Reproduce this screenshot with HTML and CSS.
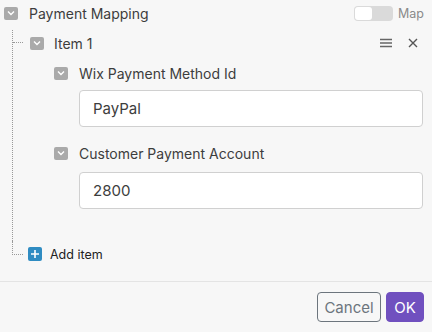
FILE: index.html
```
<!DOCTYPE html>
<html lang="en">
<head>
	<meta charset="UTF-8">
	<title>Payment Mapping</title>
	<link rel="stylesheet" href="styles.css">
</head>
<body>
	<div class="panel">
		<div class="row top">
			<span class="caret"><svg width="8" height="6" viewBox="0 0 8 6"><path d="M1 1.5 L4 4.5 L7 1.5" fill="none" stroke="#fff" stroke-width="1.4"/></svg></span>
			<span class="title">Payment Mapping</span>
			<span class="toggle"><span class="knob"></span></span>
			<span class="map">Map</span>
		</div>

		<div class="tree">
			<div class="row item-head">
				<span class="caret"><svg width="8" height="6" viewBox="0 0 8 6"><path d="M1 1.5 L4 4.5 L7 1.5" fill="none" stroke="#fff" stroke-width="1.4"/></svg></span>
				<span class="title">Item 1</span>
				<span class="tools">
					<svg width="12" height="10" viewBox="0 0 12 10"><path d="M0 1.5 H12 M0 5 H12 M0 8.5 H12" stroke="#666" stroke-width="1.3"/></svg>
					<svg width="10" height="10" viewBox="0 0 10 10"><path d="M1 1 L9 9 M9 1 L1 9" stroke="#555" stroke-width="1.4"/></svg>
				</span>
			</div>

			<div class="field first">
				<div class="row label">
					<span class="caret"><svg width="8" height="6" viewBox="0 0 8 6"><path d="M1 1.5 L4 4.5 L7 1.5" fill="none" stroke="#fff" stroke-width="1.4"/></svg></span>
					<span>Wix Payment Method Id</span>
				</div>
				<div class="input">PayPal</div>
			</div>

			<div class="field second">
				<div class="row label">
					<span class="caret"><svg width="8" height="6" viewBox="0 0 8 6"><path d="M1 1.5 L4 4.5 L7 1.5" fill="none" stroke="#fff" stroke-width="1.4"/></svg></span>
					<span>Customer Payment Account</span>
				</div>
				<div class="input">2800</div>
			</div>
		</div>

		<div class="row add">
			<span class="plus"><svg width="10" height="10" viewBox="0 0 10 10"><path d="M5 1 V9 M1 5 H9" stroke="#fff" stroke-width="1.6"/></svg></span>
			<span>Add item</span>
		</div>

		<div class="footer">
			<button class="btn cancel">Cancel</button>
			<button class="btn ok">OK</button>
		</div>
	</div>
</body>
</html>
```

FILE: styles.css
```
* {
	margin:0;
	padding:0;
	box-sizing:border-box;
}
html,body {
	height:100%;
	background:#f7f7f7;
	font-family:Inter, "Noto Sans", sans-serif;
	color:#3d3d3d;
}
.row {
	display:flex;
	align-items:center;
}
.caret {
	display:flex;
	align-items:center;
	justify-content:center;
	width:14px;
	height:13px;
	border-radius:2px;
	background:#aaa;
}
.top {
	height:26px;
	padding:0 8px 0 4px;
	font-size:14px;
}
.top .caret {
	margin-right:11px;
}
.top .title {
	flex:1;
}
.toggle {
	display:flex;
	align-items:center;
	width:39px;
	height:15px;
	padding:1px;
	border-radius:4px;
	background:#dadada;
}
.knob {
	width:17px;
	height:13px;
	border-radius:3px;
	background:#fff;
}
.map {
	margin-left:5px;
	font-size:12.5px;
	color:#8a8a8a;
}
.tree {
	position:relative;
	margin:4px 0 0 12px;
	padding-bottom:32px;
	border-left:1px dotted #999;
}
.item-head {
	position:relative;
	height:26px;
	padding:0 14px 0 17px;
	font-size:14px;
}
.item-head::before {
	content:"";
	position:absolute;
	left:0;
	top:12px;
	width:10px;
	border-top:1px dotted #999;
}
.item-head .caret {
	margin-right:10px;
}
.item-head .title {
	flex:1;
}
.tools {
	display:flex;
	align-items:center;
	gap:16px;
}
.field {
	padding:0 9px 0 41px;
}
.field.first {
	padding-top:5px;
}
.field.second {
	padding-top:14px;
}
.label {
	height:24px;
	font-size:14px;
}
.label .caret {
	margin-right:11px;
}
.input {
	display:flex;
	align-items:center;
	height:37px;
	margin:5px 0 0 25px;
	padding-left:13px;
	border:1px solid #d0d0d0;
	border-radius:4px;
	background:#fff;
	font-size:15px;
	color:#3d3d3d;
}
.field.second .input {
	margin-top:7px;
}
.add {
	position:relative;
	height:26px;
	margin-left:12px;
	padding-left:16px;
	font-size:12.5px;
	color:#222;
}
.add::before {
	content:"";
	position:absolute;
	left:0;
	top:0;
	width:10px;
	height:13px;
	border-left:1px dotted #999;
	border-bottom:1px dotted #999;
}
.plus {
	display:flex;
	align-items:center;
	justify-content:center;
	width:14px;
	height:14px;
	margin-right:8px;
	border-radius:2px;
	background:#2f8cc2;
}
.footer {
	display:flex;
	justify-content:flex-end;
	gap:5px;
	margin-top:14px;
	padding:10px 8px 0 0;
	border-top:1px solid #e4e4e4;
}
.btn {
	height:30px;
	padding:0;
	border-radius:4px;
	font-family:Inter, "Noto Sans", sans-serif;
	font-size:15px;
}
.cancel {
	width:64px;
	border:1px solid #6c757d;
	background:transparent;
	color:#6c757d;
}
.ok {
	width:38px;
	border:1px solid #7050bf;
	background:#7050bf;
	color:#fff;
}
```
